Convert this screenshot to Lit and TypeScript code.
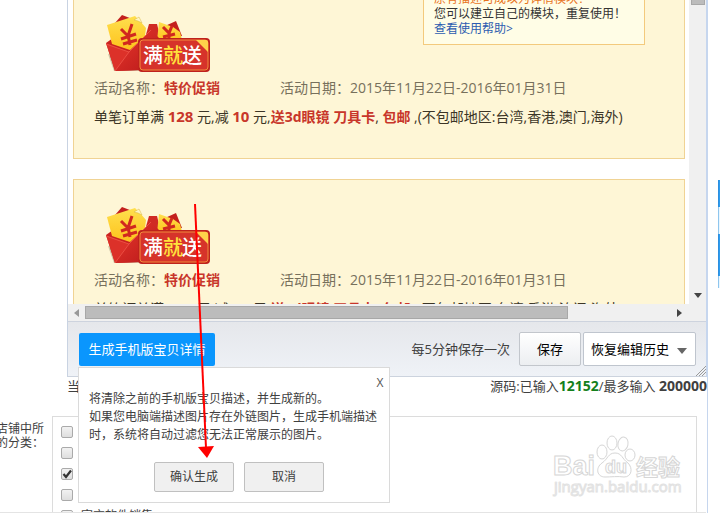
import { LitElement, html, css, svg } from "lit";
import { customElement } from "lit/decorators.js";

const sans = css`"Open Sans", "Noto Sans CJK SC", sans-serif`;

@customElement("promo-card")
class PromoCard extends LitElement {
  static styles = css`
    :host {
      display: block;
      box-sizing: border-box;
      position: relative;
      padding: 26px 19px 27px 20px;
      border: 1px solid #f0d394;
      background: #fef6d6;
      color: #3c3526;
      font: 14px/29px ${sans};
      white-space: nowrap;
    }
    .badge {
      display: block;
      margin: 0 0 1px 11px;
    }
    .badge text {
      font: 500 20px "Noto Sans CJK SC", sans-serif;
    }
    .meta {
      display: grid;
      grid-template-columns: 186px 1fr;
      color: #77705c;
    }
    .line {
      margin: 0;
      height: 29px;
    }
    b {
      color: #c8362a;
    }
    .num {
      font-size: 15px;
    }
  `;

  render() {
    return html`
      <svg class="badge" width="106" height="58" viewBox="0 0 106 58" role="img" aria-label="满就送">
        <defs>
          <linearGradient id="env" x1="0" y1="0" x2="1" y2="1">
            <stop offset="0" stop-color="#e8382c" />
            <stop offset="1" stop-color="#b8181a" />
          </linearGradient>
          <linearGradient id="gold" x1="0" y1="0" x2="0" y2="1">
            <stop offset="0" stop-color="#ffe04e" />
            <stop offset="1" stop-color="#fdc21c" />
          </linearGradient>
        </defs>
        <path d="M3 40 L9 57 H34 V50Z" fill="#8d7a5c" opacity=".4" />
        <path d="M10 9 L17 1 L30 6 L24 20Z" fill="#c3201e" />
        <path d="M60 12 L71 7 L77 22 L64 24Z" fill="#c3201e" />
        <path d="M1 29 L8 24 L40 22 L36 56 L10 57Z" fill="#c9221f" />
        <path d="M40 24 L44 10 L52 10 L56 26 L42 32Z" fill="#d02a24" />
        <path d="M2 11 L30 2 L35 7 L41 14 L40 22 L25 36 L7 30Z" fill="url(#gold)" />
        <path d="M29 6 L34 3 L37 9 L33 7Z" fill="#fff6c4" stroke="#d9b53c" stroke-width=".5" />
        <path d="M54 8 L68 13 L75 18 L77 26 L52 27Z" fill="url(#gold)" />
        <path d="M16 15 L23 22 L27 10 M23 21 L25 31 M16 25 L31 20 M18 30 L32 26" fill="none" stroke="#d1281f" stroke-width="3" />
        <path d="M58 13 L64 19 L67 12 M64 19 L64 26 M58 23 L70 20" fill="none" stroke="#d1281f" stroke-width="3" />
        <path d="M1 29 L24 38 L10 57Z" fill="#dc3129" />
        <path d="M24 38 L46 16 L54 24 L40 26 L36 38 L34 56 L10 57Z" fill="url(#env)" />
        <path d="M1 30 L24 38 L10 57 M24 38 L46 16" fill="none" stroke="#f0574a" stroke-width=".8" />
        <rect x="33" y="24" width="72" height="34" rx="4" fill="#bf211c" />
        <rect x="35" y="26" width="68" height="30" rx="3" fill="#d6332a" stroke="#f28c3c" />
        <path d="M91 26 H101 Q103 26 103 28 V38Z" fill="#ffd24a" />
        <text x="38" y="49" fill="#fff">满</text>
        <text x="58" y="49" fill="#ffe23c">就</text>
        <text x="77" y="49" fill="#fff">送</text>
      </svg>
      <div class="meta">
        <span>活动名称：<b>特价促销</b></span>
        <span>活动日期：2015年11月22日-2016年01月31日</span>
      </div>
      <p class="line">单笔订单满 <b class="num">128</b> 元,减 <b class="num">10</b> 元,<b>送3d眼镜 刀具卡</b>, <b>包邮</b> ,(不包邮地区:台湾,香港,澳门,海外)</p>
      <slot></slot>
    `;
  }
}

@customElement("app-root")
class AppRoot extends LitElement {
  static styles = css`
    :host {
      display: flex;
      position: relative;
      height: 100vh;
      overflow: hidden;
      box-sizing: border-box;
      background: #fff;
      color: #404040;
      font: 12px/18px ${sans};
    }
    * {
      box-sizing: border-box;
    }
    button,
    select {
      margin: 0;
      padding: 0;
      font: inherit;
      color: inherit;
    }
    .page {
      flex: 1;
      min-width: 0;
      border-right: 1px solid #c6d6ee;
    }
    .editor {
      margin-left: 67px;
      border-left: 1px solid #c9d3e2;
      border-right: 1px solid #c6d6ee;
    }
    .frame {
      display: grid;
      grid-template-columns: 1fr 17px;
    }
    .canvas {
      height: 304px;
      overflow: hidden;
      padding: 0 4px 0 5px;
    }
    .scrolled {
      display: grid;
      gap: 20px;
      margin-top: -13px;
    }
    .tip {
      position: absolute;
      top: -20px;
      right: 39px;
      width: 222px;
      height: 77px;
      padding: 22px 10px 0;
      border: 1px solid #f3ca7d;
      background: #fffde6;
      font: 12px/15px ${sans};
      color: #333;
    }
    .tip em {
      font-style: normal;
      color: #e8731c;
    }
    .tip a {
      color: #2c5cb0;
      text-decoration: none;
    }
    .vbar {
      display: flex;
      flex-direction: column;
      justify-content: space-between;
      align-items: center;
      background: #f0f0f0;
      padding-bottom: 6px;
    }
    .vthumb {
      width: 14px;
      height: 5px;
      background: #bcbcbc;
      border: 1px solid #a8a8a8;
      border-top: 0;
    }
    .hbar {
      display: flex;
      align-items: center;
      height: 17px;
      padding: 0 24px 0 6px;
      background: #f0f0f0;
    }
    .hthumb {
      flex: 0 1 483px;
      height: 13px;
      margin: 0 auto 0 6px;
      background: #bcbcbc;
      border: 1px solid #a8a8a8;
    }
    .toolbar {
      position: relative;
      display: flex;
      align-items: center;
      height: 56px;
      padding: 0 10px 0 11px;
      border-top: 1px solid #cdd3de;
      border-bottom: 1px solid #ccd3de;
      background: linear-gradient(#e5e7eb, #eff2f7);
      font-size: 13px;
    }
    .generate {
      width: 136px;
      height: 33px;
      border: 0;
      border-radius: 2px;
      background: #0a96fd;
      color: #fff;
    }
    .autosave {
      margin-left: auto;
      margin-right: 9px;
    }
    .save {
      width: 62px;
      height: 34px;
      margin-right: 2px;
      border: 1px solid #c2c6cc;
      border-radius: 2px;
      background: linear-gradient(#fff, #eceef1);
      color: #000;
    }
    .history {
      position: relative;
      display: flex;
      align-items: center;
    }
    .history select {
      appearance: none;
      width: 113px;
      height: 34px;
      padding-left: 7px;
      border: 1px solid #bfc5ce;
      border-radius: 2px;
      background: #fff;
      color: #000;
    }
    .caret {
      position: absolute;
      right: 9px;
      top: 16px;
    }
    .grip {
      position: absolute;
      right: 0;
      bottom: 0;
    }
    .count {
      display: flex;
      justify-content: space-between;
      height: 39px;
      margin-left: 67px;
      line-height: 18px;
      font-size: 13px;
    }
    .count b {
      font-size: 14px;
    }
    .count .used {
      color: #14801c;
    }
    .category {
      display: flex;
      line-height: 14px;
    }
    .category > .name {
      width: 52px;
      padding-top: 6px;
      white-space: nowrap;
    }
    .name span {
      display: block;
      margin-left: -4px;
    }
    .options {
      flex: 1;
      height: 120px;
      margin-right: 10px;
      padding: 4px 8px;
      border: 1px solid #dcdcdc;
    }
    .options label {
      display: flex;
      align-items: center;
      gap: 8px;
      height: 21px;
    }
    .options input {
      appearance: none;
      width: 12px;
      height: 12px;
      margin: 0;
      border: 1px solid #aaa;
      border-radius: 2px;
      background: linear-gradient(#f2f2f2, #dedede);
    }
    .box {
      display: grid;
    }
    .box > * {
      grid-area: 1 / 1;
    }
    .tick {
      pointer-events: none;
    }
    .dialog {
      position: absolute;
      left: 78px;
      top: 367px;
      width: 312px;
      height: 136px;
      padding: 22px 10px 10px;
      border: 1px solid #dadada;
      background: #fff;
    }
    .dialog p {
      margin: 0;
      white-space: nowrap;
    }
    .close {
      position: absolute;
      right: 3px;
      top: 6px;
      width: 12px;
      height: 18px;
      border: 0;
      background: none;
      color: #555;
    }
    .actions {
      display: flex;
      justify-content: center;
      gap: 10px;
      margin-top: 18px;
      padding-left: 10px;
    }
    .actions button {
      width: 80px;
      height: 30px;
      border: 1px solid #c0c0c0;
      border-radius: 2px;
      background: #f0f0f0;
    }
    .arrow {
      position: absolute;
      left: 190px;
      top: 200px;
      pointer-events: none;
    }
    .watermark {
      position: absolute;
      right: 36px;
      bottom: 14px;
      pointer-events: none;
    }
    .watermark text {
      font-family: "Liberation Sans", "Noto Sans CJK SC", sans-serif;
      font-weight: 700;
    }
    .watermark .url {
      font-family: "Open Sans", sans-serif;
      font-weight: 400;
    }
    .side {
      width: 12px;
      padding: 180px 0 0 10px;
    }
    .tab {
      border-left: 1px solid #8fc6ee;
      background: #eaf6fe;
      height: 27px;
    }
    .tab.on {
      background: #2d9cef;
      border-color: #2d8fe0;
    }
    .tab.tall {
      height: 42px;
    }
    .tab.short {
      height: 12px;
    }
    .edge {
      position: absolute;
      left: 0;
      right: 14px;
      bottom: 0;
      height: 1px;
      background: #e4e4e4;
    }
  `;

  private options = [
    { text: "", on: false },
    { text: "", on: false },
    { text: "", on: true },
    { text: "", on: false },
    { text: "官方软件销售", on: false },
  ];

  private option(o: { text: string; on: boolean }) {
    return html`<label>
      <span class="box">
        <input type="checkbox" ?checked=${o.on} aria-label=${o.text || "分类"} />
        ${o.on
          ? html`<svg class="tick" width="12" height="12" viewBox="0 0 12 12">
              ${svg`<path d="M2.5 6 L5 9 L10 2.5" fill="none" stroke="#333" stroke-width="2.2"/>`}
            </svg>`
          : ""}
      </span>
      ${o.text}
    </label>`;
  }

  render() {
    return html`
      <main class="page">
        <section class="editor">
          <div class="frame">
            <div class="canvas">
              <div class="scrolled">
                <promo-card>
                  <div class="tip">
                    <em>原有描述可成以为详情模块！</em><br />
                    您可以建立自己的模块，重复使用！<br />
                    <a href="#help">查看使用帮助&gt;</a>
                  </div>
                </promo-card>
                <promo-card></promo-card>
              </div>
            </div>
            <div class="vbar">
              <div class="vthumb"></div>
              <svg width="8" height="5"><path d="M0 0H8L4 5Z" fill="#444" /></svg>
            </div>
          </div>
          <div class="hbar">
            <svg width="5" height="8"><path d="M5 0V8L0 4Z" fill="#999" /></svg>
            <div class="hthumb"></div>
            <svg width="5" height="8"><path d="M0 0V8L5 4Z" fill="#444" /></svg>
          </div>
          <div class="toolbar">
            <button class="generate">生成手机版宝贝详情</button>
            <span class="autosave">每5分钟保存一次</span>
            <button class="save">保存</button>
            <div class="history">
              <select aria-label="恢复编辑历史">
                <option>恢复编辑历史</option>
              </select>
              <svg class="caret" width="10" height="6"><path d="M0 0H10L5 6Z" fill="#666" /></svg>
            </div>
            <svg class="grip" width="10" height="10">
              <path d="M0 10L10 0M3 10L10 3M6 10L10 6" stroke="#999" fill="none" />
            </svg>
          </div>
        </section>
        <div class="count">
          <span>当前</span>
          <span>源码:已输入<b class="used">12152</b>/最多输入 <b>200000</b></span>
        </div>
        <div class="category">
          <div class="name"><span>店铺中所</span><span>的分类：</span></div>
          <div class="options">${this.options.map((o) => this.option(o))}</div>
        </div>
      </main>
      <aside class="side">
        <div class="tab on"></div>
        <div class="tab"></div>
        <div class="tab on tall"></div>
        <div class="tab short"></div>
      </aside>

      <div class="dialog" role="dialog" aria-label="生成手机版宝贝详情">
        <button class="close" aria-label="关闭">X</button>
        <p>将清除之前的手机版宝贝描述，并生成新的。</p>
        <p>如果您电脑端描述图片存在外链图片，生成手机端描述</p>
        <p>时，系统将自动过滤您无法正常展示的图片。</p>
        <div class="actions">
          <button>确认生成</button>
          <button>取消</button>
        </div>
      </div>

      <svg class="watermark" width="132" height="66" viewBox="0 0 132 66">
        <g fill="#fff" stroke="#d6d6d6" stroke-width="1">
          <text x="1" y="42" font-size="27">Bai</text>
          <ellipse cx="50" cy="19" rx="5" ry="7" />
          <ellipse cx="60" cy="10" rx="5" ry="7" />
          <ellipse cx="71" cy="11" rx="5" ry="7" transform="rotate(12 71 11)" />
          <ellipse cx="78" cy="22" rx="5" ry="6" />
          <path d="M63 20 C56 20 56 26 50 30 C43 35 45 44 53 44 C59 44 66 43 72 44 C80 44 81 35 76 30 C70 26 70 20 63 20Z" />
          <text x="53" y="40" font-size="18">du</text>
          <text x="84" y="42" font-size="22">经验</text>
          <text class="url" x="2" y="59" font-size="15" stroke="#e2e2e2">jingyan.baidu.com</text>
        </g>
      </svg>

      <svg class="arrow" width="30" height="262" viewBox="0 0 30 262">
        <path d="M5 4L16 248" stroke="#f00" stroke-width="2" />
        <path d="M8 247L24 246L17 258Z" fill="#f00" />
      </svg>
      <div class="edge"></div>
    `;
  }
}
